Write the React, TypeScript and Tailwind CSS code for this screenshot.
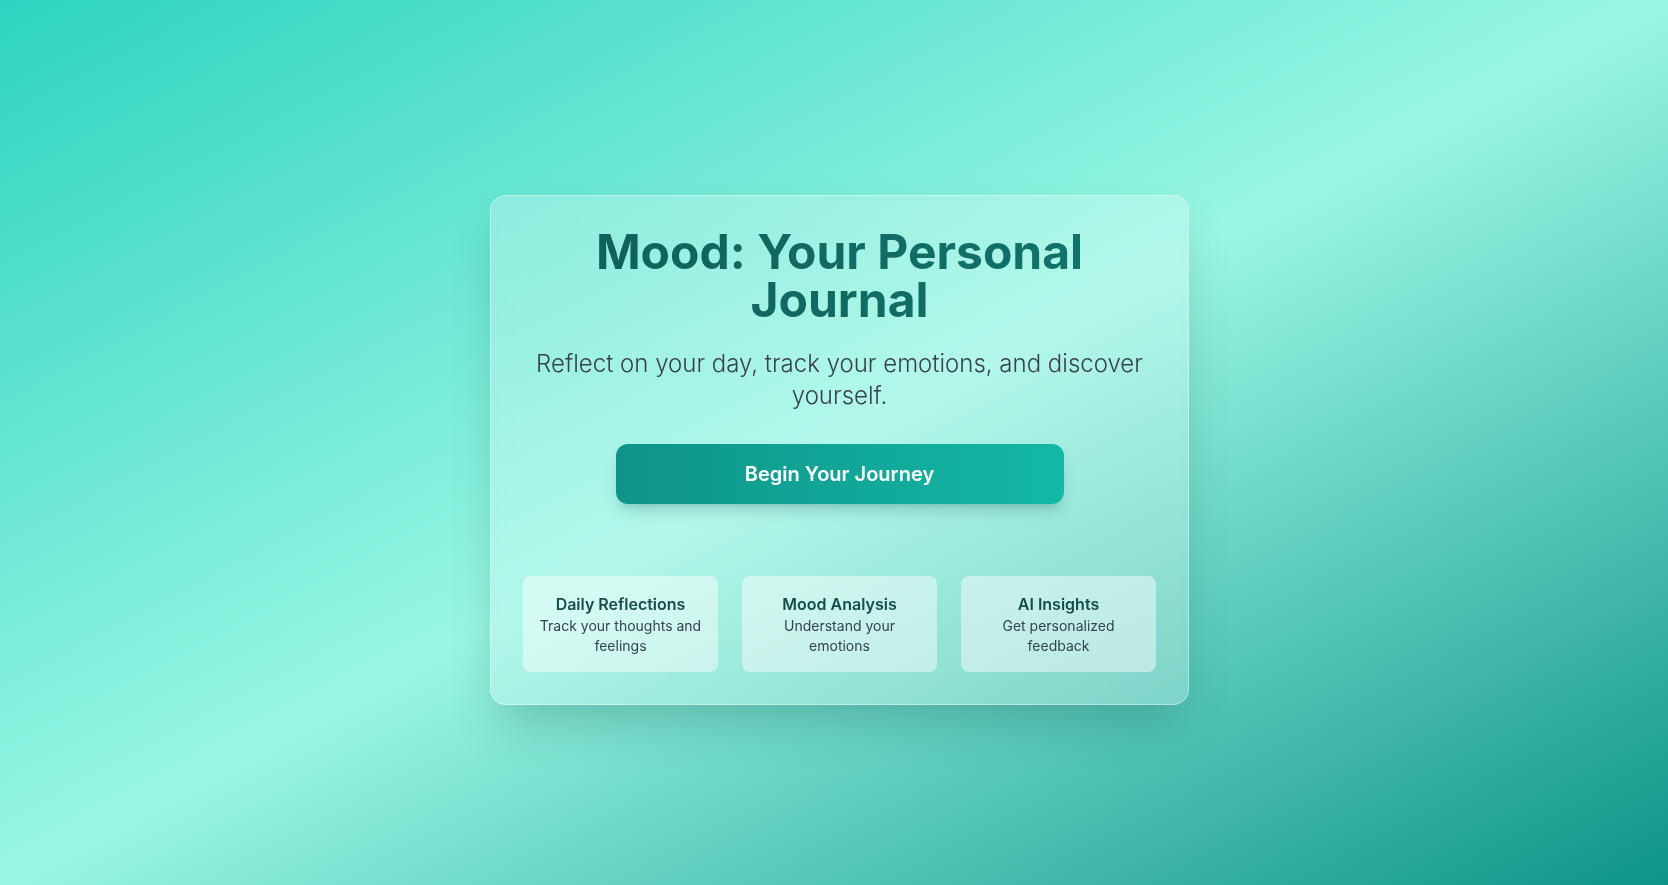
import React from "react";

const FEATURES = [
  { title: "Daily Reflections", text: "Track your thoughts and feelings" },
  { title: "Mood Analysis", text: "Understand your emotions" },
  { title: "AI Insights", text: "Get personalized feedback" },
];

export default function App() {
  return (
    <div
      className="min-h-screen bg-[linear-gradient(to_bottom_right,#2dd4bf,#99f6e4,#0d9488)]"
      style={{ fontFamily: "Inter, 'Noto Sans', sans-serif" }}
    >
      <div className="flex min-h-screen items-center justify-center pt-[14px] pl-[11px]">
        {/* Card */}
        <div className="w-[699px] rounded-2xl border border-white/40 bg-white/25 p-8 text-center shadow-2xl shadow-[#134e4a]/30 backdrop-blur-lg">
          <h1 className="mb-6 bg-[linear-gradient(to_right,#115e59,#0f766e)] bg-clip-text text-5xl leading-none font-bold text-transparent">
            Mood: Your Personal Journal
          </h1>
          <p className="mb-8 text-2xl leading-8 font-light text-[#374151]">
            Reflect on your day, track your emotions, and discover yourself.
          </p>

          <button className="mx-auto mb-[72px] block w-full max-w-md rounded-xl bg-[linear-gradient(to_right,#0d9488,#14b8a6)] py-4 text-xl font-semibold text-white shadow-lg shadow-[#134e4a]/20">
            Begin Your Journey
          </button>

          {/* Features */}
          <div className="grid grid-cols-3 gap-6">
            {FEATURES.map((f) => (
              <div key={f.title} className="rounded-lg bg-white/45 p-4">
                <h3 className="text-base font-semibold text-[#134e4a]">{f.title}</h3>
                <p className="text-sm text-[#374151]">{f.text}</p>
              </div>
            ))}
          </div>
        </div>
      </div>
    </div>
  );
}
